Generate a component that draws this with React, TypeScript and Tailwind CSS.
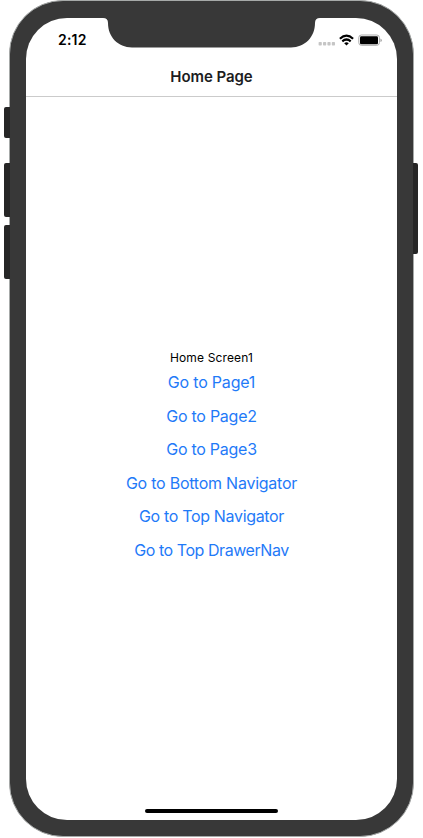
const links = [
  { label: 'Go to Page1', spacing: 'tracking-[-0.2px]' },
  { label: 'Go to Page2', spacing: 'tracking-[-0.26px]' },
  { label: 'Go to Page3', spacing: 'tracking-[-0.26px]' },
  { label: 'Go to Bottom Navigator', spacing: 'tracking-[-0.24px]' },
  { label: 'Go to Top Navigator', spacing: 'tracking-[-0.33px]' },
  { label: 'Go to Top DrawerNav', spacing: 'tracking-[-0.44px]' },
];

function Notch() {
  return (
    <svg className="absolute left-[75px] top-[-1px]" width="221" height="31" viewBox="0 0 221 31" fill="#383838">
      <path d="M0 0H221V1H219Q214 1 214 6C214 20 204 30.4 190 30.4H31C17 30.4 7 20 7 6Q7 1 2 1H0Z" />
    </svg>
  );
}

function StatusBar() {
  return (
    <div className="flex h-[44px] items-start justify-between pl-[32px] pr-[14px] pt-[13px]">
      <span className="text-[14px] font-semibold leading-[18px] tracking-[0.2px] text-black">2:12</span>
      <svg width="65" height="16" viewBox="0 0 65 16">
        <g fill="#c5c5c5">
          <rect x="0.6" y="11" width="3.2" height="3.4" rx="0.7" />
          <rect x="5" y="11" width="3.2" height="3.4" rx="0.7" />
          <rect x="9.4" y="11" width="3.2" height="3.4" rx="0.7" />
          <rect x="13.8" y="11" width="3.2" height="3.4" rx="0.7" />
        </g>
        <g fill="none" stroke="#000" strokeWidth="2.2">
          <path d="M21.9 7.7Q28.5 1.7 35.1 7.7" />
          <path d="M24.3 10.3Q28.5 6.7 32.7 10.3" />
        </g>
        <path d="M26.2 12.2Q28.5 10.4 30.8 12.2L28.5 14.4Z" />
        <rect x="40.8" y="4" width="20.6" height="10.3" rx="2.6" fill="none" stroke="#aaa" />
        <rect x="42" y="5.2" width="18" height="8" rx="1.3" />
        <path d="M62.4 7.4Q63.9 7.8 63.9 9.2T62.4 11.1Z" fill="#aaa" />
      </svg>
    </div>
  );
}

export default function App() {
  return (
    <div className="relative h-[838px] w-[423px] overflow-hidden bg-white pl-[9px] font-['Inter','Liberation_Sans',sans-serif]">
      <div className="absolute left-[4px] top-[107px] h-[31px] w-[6px] rounded-l-[2px] bg-[#262626]" />
      <div className="absolute left-[4px] top-[163px] h-[54px] w-[6px] rounded-l-[2px] bg-[#262626]" />
      <div className="absolute left-[4px] top-[225px] h-[54px] w-[6px] rounded-l-[2px] bg-[#262626]" />
      <div className="h-[837px] w-[405px] rounded-[54px] border border-[#a6a9a8] bg-[#383838] px-[16px] pb-[16px] pt-[17px]">
        <div className="relative flex h-[802px] w-[371px] flex-col rounded-[41px] bg-white">
          <Notch />
          <StatusBar />
          <header className="flex h-[35px] items-center justify-center border-b border-[#cbcbcb] pb-[5px]">
            <h1 className="text-[15px] font-semibold leading-[18px] tracking-[-0.06px] text-[#1c1c1e]">Home Page</h1>
          </header>
          <main className="flex flex-1 flex-col items-center pt-[253px]">
            <p className="mb-px text-[12px] leading-[15px] tracking-[0.14px] text-black">Home Screen1</p>
            {links.map((link) => (
              <button key={link.label} className={`flex h-[33.55px] items-start pt-[7.3px] text-[16px] leading-[19px] text-[#1f7af8] ${link.spacing}`}>
                {link.label}
              </button>
            ))}
          </main>
          <div className="mb-[7px] h-[4px] w-[133px] self-center rounded-full bg-black" />
        </div>
      </div>
      <div className="absolute left-[413px] top-[163px] h-[91px] w-[5px] rounded-r-[2px] bg-[#262626]" />
    </div>
  );
}
